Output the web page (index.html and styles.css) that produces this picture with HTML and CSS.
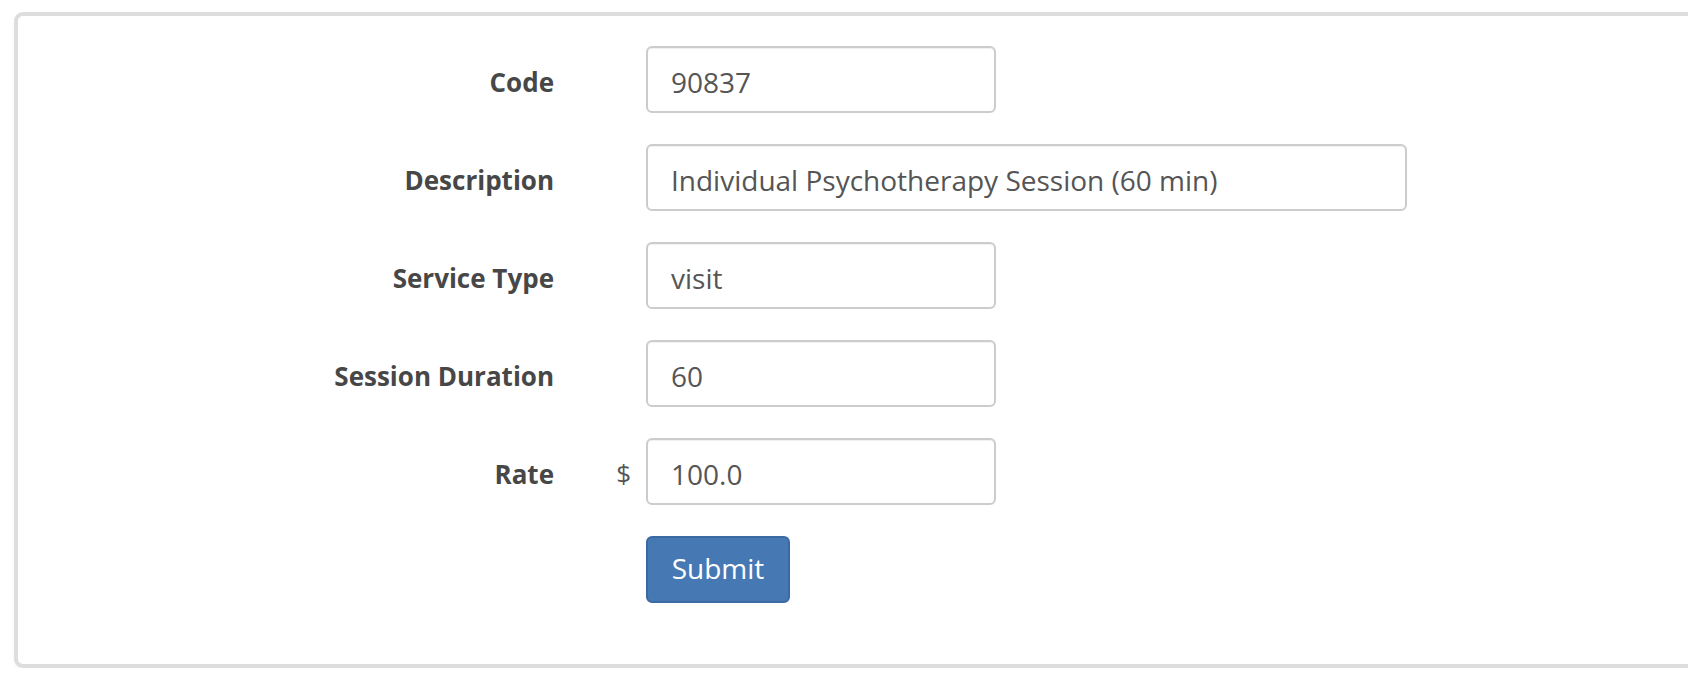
FILE: index.html
```html
<!DOCTYPE html>
<html>
<head>
<meta charset="utf-8">
<link rel="stylesheet" href="styles.css">
</head>
<body>
<div class="panel">
  <form class="form">
    <div class="row">
      <label class="label">Code</label>
      <span class="addon"></span>
      <input class="field" type="text" value="90837">
    </div>
    <div class="row">
      <label class="label">Description</label>
      <span class="addon"></span>
      <input class="field wide" type="text" value="Individual Psychotherapy Session (60 min)">
    </div>
    <div class="row">
      <label class="label">Service Type</label>
      <span class="addon"></span>
      <input class="field" type="text" value="visit">
    </div>
    <div class="row">
      <label class="label">Session Duration</label>
      <span class="addon"></span>
      <input class="field" type="text" value="60">
    </div>
    <div class="row">
      <label class="label">Rate</label>
      <span class="addon">$</span>
      <input class="field" type="text" value="100.0">
    </div>
    <div class="row">
      <span class="label"></span>
      <span class="addon"></span>
      <button class="btn" type="button">Submit</button>
    </div>
  </form>
</div>
</body>
</html>
```

FILE: styles.css
```css
html, body {
  margin: 0;
  padding: 0;
  background: #fff;
  overflow: hidden;
}

body {
  font-family: "Open Sans", "Liberation Sans", sans-serif;
  color: #4a4a4a;
}

.panel {
  margin: 12px 0 0 14px;
  width: 1720px;
  height: 656px;
  box-sizing: border-box;
  border: 4px solid #dddddd;
  border-radius: 9px;
  box-shadow: 0 2px 3px rgba(0, 0, 0, 0.05);
  padding-top: 30px;
}

.form {
  display: flex;
  flex-direction: column;
  gap: 31px;
}

.row {
  display: flex;
  align-items: center;
  height: 67px;
}

.label {
  width: 536px;
  padding-top: 4px;
  text-align: right;
  font-weight: 700;
  font-size: 26px;
  color: #474747;
}

.addon {
  width: 77px;
  padding-top: 3px;
  padding-right: 15px;
  text-align: right;
  font-size: 26px;
  color: #555;
}

.field {
  box-sizing: border-box;
  width: 350px;
  height: 67px;
  border: 2px solid #cccccc;
  border-radius: 6px;
  padding: 4px 23px 0;
  font-family: "Open Sans", "Liberation Sans", sans-serif;
  font-size: 28px;
  color: #555555;
  background: #fff;
  box-shadow: inset 0 1px 1px rgba(0, 0, 0, 0.06);
  outline: none;
}

.field.wide {
  width: 761px;
}

.btn {
  box-sizing: border-box;
  width: 144px;
  height: 67px;
  border: 2px solid #3b6aa3;
  border-radius: 6px;
  background: #4679b3;
  color: #fff;
  font-family: "Open Sans", "Liberation Sans", sans-serif;
  font-size: 28px;
  padding: 0 0 3px;
}
```
